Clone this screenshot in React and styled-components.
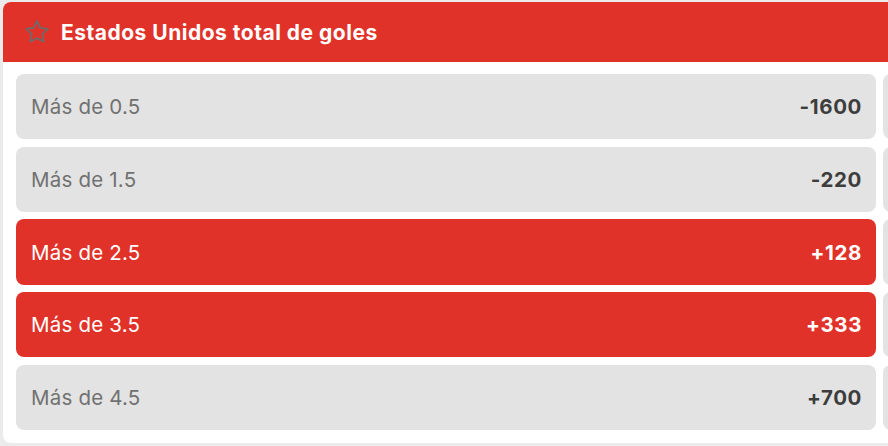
import React from "react";
import styled, { createGlobalStyle } from "styled-components";

const Global = createGlobalStyle`
  body {
    margin: 0;
    background: #ebebeb;
    font-family: Inter, "Liberation Sans", sans-serif;
    overflow: hidden;
  }
`;

const options = [
  { label: "Más de 0.5", odds: "-1600" },
  { label: "Más de 1.5", odds: "-220" },
  { label: "Más de 2.5", odds: "+128", active: true },
  { label: "Más de 3.5", odds: "+333", active: true },
  { label: "Más de 4.5", odds: "+700" },
];

const StarIcon = () => (
  <svg width="28" height="28" viewBox="0 0 24 24" fill="none">
    <path
      d="M12 2.6l2.8 5.95 6.5.85-4.8 4.45 1.25 6.45L12 17.15l-5.75 3.15 1.25-6.45L2.7 9.4l6.5-.85z"
      stroke="#6b6b6b"
      strokeWidth="1.5"
      strokeLinejoin="round"
    />
  </svg>
);

const App = () => {
  return (
    <>
      <Global />
      <Page>
        <Card>
          <Header>
            <StarIcon />
            <Title>Estados Unidos total de goles</Title>
          </Header>
          <Body>
            <Column>
              {options.map((m) => (
                <Option key={m.label} $active={m.active}>
                  <Label $active={m.active}>{m.label}</Label>
                  <Odds>{m.odds}</Odds>
                </Option>
              ))}
            </Column>
            {/* second column of the market, scrolled past the edge */}
            <Column>
              {options.map((m) => (
                <Option key={m.label} />
              ))}
            </Column>
          </Body>
        </Card>
      </Page>
    </>
  );
};

export default App;

const Page = styled.div`
  padding: 2px 0 0 3px;
  height: 446px;
  box-sizing: border-box;
`;

const Card = styled.div`
  width: 1740px;
  background: #fff;
  border-radius: 8px;
  overflow: hidden;
`;

const Header = styled.div`
  height: 60px;
  background: #e1322a;
  display: flex;
  align-items: center;
  gap: 10px;
  padding: 0 0 0 20px;
`;

const Title = styled.h2`
  margin: 0;
  font-size: 21px;
  font-weight: 700;
  color: #fff;
  letter-spacing: 0.5px;
`;

const Body = styled.div`
  display: grid;
  grid-template-columns: 860px 860px;
  column-gap: 7px;
  padding: 12px 13px 13px;
`;

const Column = styled.div`
  display: flex;
  flex-direction: column;
  gap: 7.3px;
`;

const Option = styled.div`
  height: 65.4px;
  border-radius: 8px;
  display: flex;
  align-items: center;
  justify-content: space-between;
  padding: 0 14px 0 15px;
  background: ${(p) => (p.$active ? "#e1322a" : "#e3e3e3")};
  color: ${(p) => (p.$active ? "#fff" : "#3d3d3d")};
`;

const Label = styled.span`
  font-size: 20.5px;
  font-weight: 400;
  letter-spacing: 0.2px;
  color: ${(p) => (p.$active ? "#fff" : "#717171")};
`;

const Odds = styled.span`
  font-size: 20.5px;
  font-weight: 700;
  letter-spacing: 0.6px;
`;
